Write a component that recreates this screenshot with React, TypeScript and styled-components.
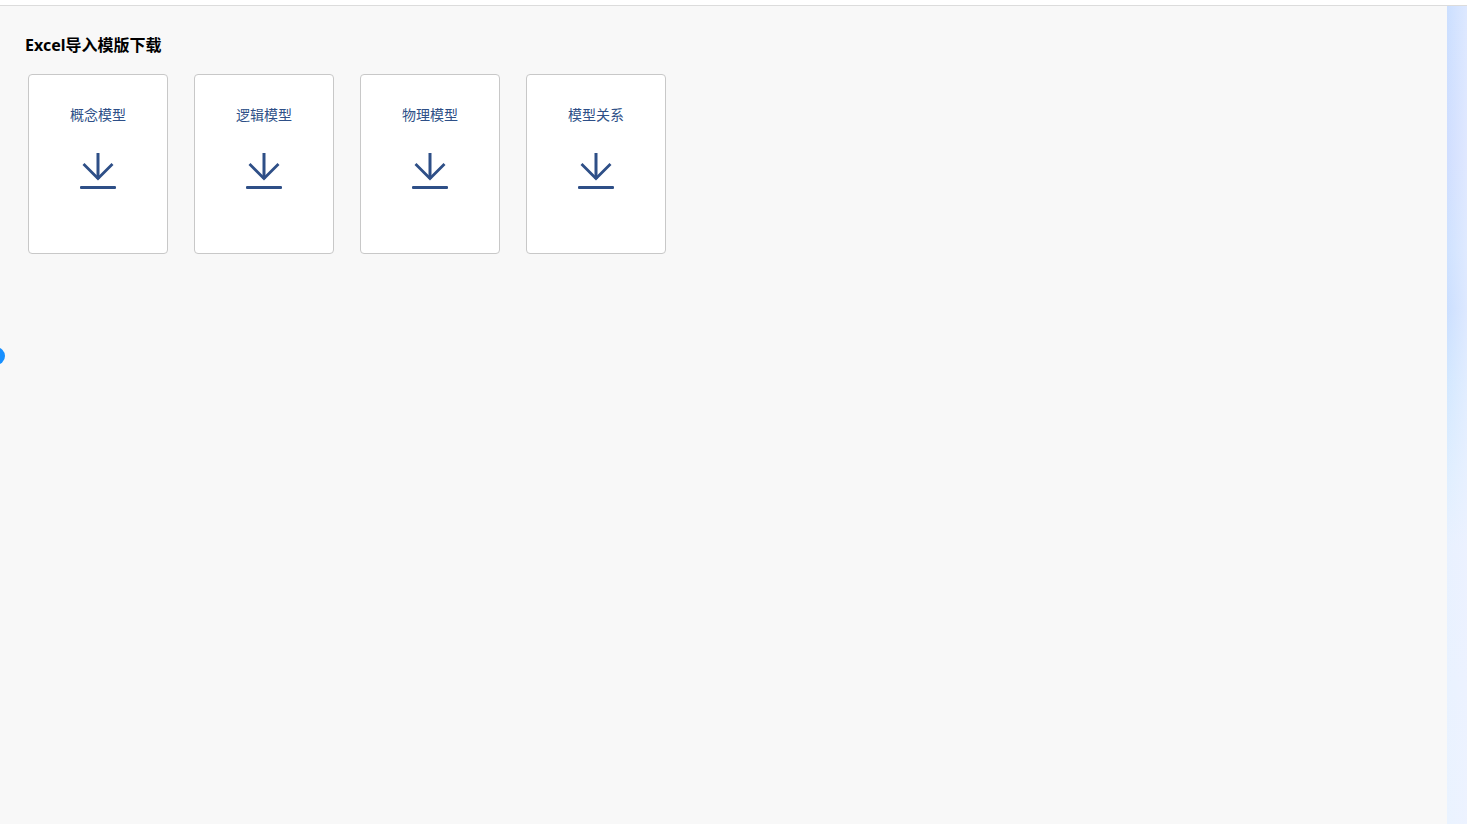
import React from "react";
import styled, { createGlobalStyle } from "styled-components";

const GlobalStyle = createGlobalStyle`
  * { box-sizing: border-box; }
  body {
    margin: 0;
    background: #f8f8f8;
    font-family: "Noto Sans", "Noto Sans CJK SC", sans-serif;
  }
`;

const Page = styled.div`
  display: flex;
  flex-direction: column;
  min-height: 100vh;
`;

const TopBar = styled.header`
  height: 6px;
  border-bottom: 1px solid #dcdcdc;
  background: #fff;
`;

const Body = styled.div`
  display: flex;
  flex: 1;
`;

const Content = styled.main`
  position: relative;
  flex: 1;
  padding: 27px 24px 24px 25px;
  overflow: hidden;
`;

const SideStrip = styled.aside`
  width: 20px;
  background:
    linear-gradient(90deg, transparent, rgba(240, 242, 255, 0.5)),
    linear-gradient(
      180deg,
      #cbdfff 0%,
      #d0deff 18%,
      #cfe2ff 30%,
      #cbdfff 37%,
      #d3e8ff 46%,
      #e0efff 58%,
      #e8f1ff 66%,
      #eaf3ff 100%
    );
`;

const Title = styled.h1`
  margin: 0;
  font-size: 16px;
  line-height: 24px;
  font-weight: 700;
  color: #000;
`;

const CardList = styled.div`
  display: flex;
  flex-wrap: wrap;
  gap: 26px;
  padding: 17px 3px;
`;

const Card = styled.a`
  display: flex;
  flex-direction: column;
  align-items: center;
  gap: 26px;
  width: 140px;
  height: 180px;
  padding-top: 29px;
  border: 1px solid #c8c8c8;
  border-radius: 4px;
  background: #fff;
  color: #2e4f87;
  font-size: 14px;
  line-height: 22px;
  text-decoration: none;
`;

const Handle = styled.button`
  position: absolute;
  top: 341px;
  left: -13px;
  width: 18px;
  height: 18px;
  padding: 0;
  border: 0;
  border-radius: 50%;
  background: #1890ff;
  cursor: pointer;
`;

const DownloadIcon = () => (
  <svg width="36" height="38" viewBox="0 0 36 38" fill="none" stroke="currentColor" aria-hidden="true">
    <path d="M18 1V27" strokeWidth="3" />
    <path d="M3.5 12L18 26.5L32.5 12" strokeWidth="2.8" />
    <path d="M1.2 35.5H34.8" strokeWidth="3" strokeLinecap="round" />
  </svg>
);

const templates = ["概念模型", "逻辑模型", "物理模型", "模型关系"];

export default function App() {
  return (
    <Page lang="zh-CN">
      <GlobalStyle />
      <TopBar />
      <Body>
        <Content>
          <Title>Excel导入模版下载</Title>
          <CardList>
            {templates.map((name) => (
              <Card key={name} href="#" download>
                <span>{name}</span>
                <DownloadIcon />
              </Card>
            ))}
          </CardList>
          <Handle type="button" aria-label="展开侧栏" />
        </Content>
        <SideStrip />
      </Body>
    </Page>
  );
}
